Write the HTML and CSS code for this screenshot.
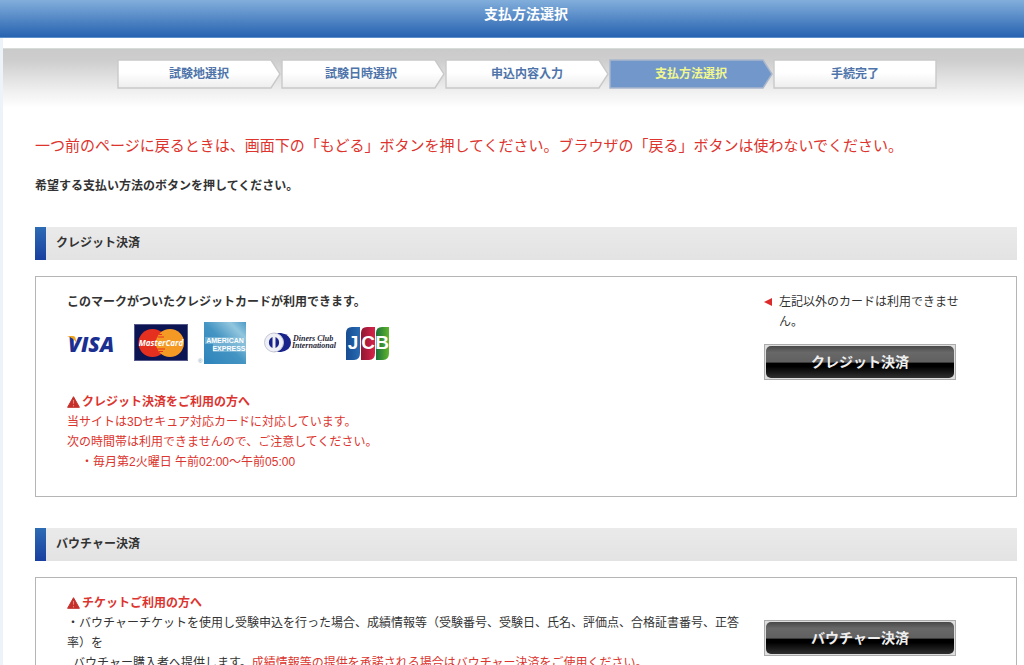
FILE: index.html
```html
<!DOCTYPE html>
<html lang="ja">
<head>
<meta charset="utf-8">
<title>支払方法選択</title>
<link rel="stylesheet" href="styles.css">
</head>
<body>
<header class="page-header"><h1>支払方法選択</h1></header>
<div class="page">
  <nav class="steps-band" aria-label="申込手順">
    <ol class="steps">
      <li class="step"><svg viewBox="0 0 164 30" aria-hidden="true"><use href="#arrow" fill="url(#stepFill)" stroke="#c9c9c9"/></svg><span>試験地選択</span></li>
      <li class="step step-early"><svg viewBox="0 0 164 30" aria-hidden="true"><use href="#arrow" fill="url(#stepFill)" stroke="#c9c9c9"/></svg><span>試験日時選択</span></li>
      <li class="step"><svg viewBox="0 0 164 30" aria-hidden="true"><use href="#arrow" fill="url(#stepFill)" stroke="#c9c9c9"/></svg><span>申込内容入力</span></li>
      <li class="step step-current" aria-current="step"><svg viewBox="0 0 164 30" aria-hidden="true"><use href="#arrow" fill="#7197cb" stroke="#a9b6cc"/></svg><span>支払方法選択</span></li>
      <li class="step"><svg viewBox="0 0 164 30" aria-hidden="true"><path d="M1 1H163V29H1Z" fill="url(#stepFill)" stroke="#c9c9c9" stroke-width="1.4"/></svg><span>手続完了</span></li>
    </ol>
  </nav>
  <svg class="defs" aria-hidden="true">
    <defs>
      <linearGradient id="stepFill" x1="0" y1="0" x2="0" y2="1"><stop offset=".45" stop-color="#fff"/><stop offset="1" stop-color="#ededed"/></linearGradient>
      <path id="arrow" d="M1 1H154L163 15L154 29H1Z" stroke-width="1.4"/>
      <symbol id="warning" viewBox="0 0 13 12"><path d="M6.5 .7L12.4 11.3H.6Z" fill="#c5302b" stroke="#c5302b" stroke-linejoin="round"/><path d="M6.5 4V7.8M6.5 9V10.4" stroke="#e0837d" stroke-width="1.1"/></symbol>
    </defs>
  </svg>
  <main class="content">
    <p class="notice">一つ前のページに戻るときは、画面下の「もどる」ボタンを押してください。ブラウザの「戻る」ボタンは使わないでください。</p>
    <p class="lead">希望する支払い方法のボタンを押してください。</p>

    <section class="method">
      <h2>クレジット決済</h2>
      <div class="box">
        <div class="details">
          <p class="strong">このマークがついたクレジットカードが利用できます。</p>
          <svg class="cards" viewBox="0 0 324 44" role="img" aria-label="VISA、MasterCard、American Express、Diners Club International、JCB">
            <defs>
              <linearGradient id="amex" x1="0" y1="1" x2="1" y2="0"><stop offset="0" stop-color="#2c83bb"/><stop offset=".5" stop-color="#4595c3"/><stop offset=".8" stop-color="#92c6de"/><stop offset="1" stop-color="#4b9bc7"/></linearGradient>
              <linearGradient id="jcbBlue"><stop offset="0" stop-color="#174c91"/><stop offset="1" stop-color="#286bb1"/></linearGradient>
              <linearGradient id="jcbRed"><stop offset="0" stop-color="#8f1834"/><stop offset="1" stop-color="#d72349"/></linearGradient>
              <linearGradient id="jcbGreen"><stop offset="0" stop-color="#18713a"/><stop offset="1" stop-color="#61b52c"/></linearGradient>
            </defs>
            <text x="1" y="31" class="visa">VISA</text>
            <path d="M0 15H6Q8 15 8.5 17L9.5 22Q7 17 0 15Z" fill="#f0a51f"/>
            <rect x="67.5" y="3.5" width="53" height="36" fill="#0c1554" stroke="#55598a"/>
            <circle cx="85.5" cy="22" r="14" fill="#e6301f"/>
            <circle cx="103" cy="22" r="14" fill="#f49a24"/>
            <path d="M92 13.5H95M90.5 16H97M90 28H98M92 30.5H96" stroke="#e6301f"/>
            <text x="94" y="25" text-anchor="middle" class="mastercard">MasterCard</text>
            <rect x="137" y="1" width="42" height="42" fill="url(#amex)"/>
            <path d="M138 16H177V22H179V31H146V23H138Z" fill="#8fc3dd" opacity=".6"/>
            <text x="158" y="22" text-anchor="middle" class="amex">AMERICAN</text>
            <text x="162" y="30" text-anchor="middle" class="amex">EXPRESS</text>
            <text x="131" y="42" class="registered">®</text>
            <path d="M208 12H214Q224 14 224 21.5T214 31H207Z" fill="#18248b"/>
            <circle cx="207" cy="21.5" r="9.5" fill="#eef0f5" stroke="#c4c7d5"/>
            <path d="M205.5 16A6 6 0 0 0 205.5 27ZM208.5 16A6 6 0 0 1 208.5 27Z" fill="#18248b"/>
            <text x="226" y="20" class="diners">Diners Club</text>
            <text x="225" y="27" class="diners">International</text>
            <path d="M285 6H293V32Q293 39 287 39H279V12Q279 6 285 6Z" fill="url(#jcbBlue)"/>
            <path d="M300 6H308V32Q308 39 302 39H294V12Q294 6 300 6Z" fill="url(#jcbRed)"/>
            <path d="M315 6H322V32Q322 39 316 39H309V12Q309 6 315 6Z" fill="url(#jcbGreen)"/>
            <text text-anchor="middle" y="28" class="jcb"><tspan x="286">J</tspan><tspan x="301">C</tspan><tspan x="315">B</tspan></text>
          </svg>
          <div class="red">
            <p class="caution"><svg class="warning" aria-hidden="true"><use href="#warning"/></svg>クレジット決済をご利用の方へ</p>
            <p>当サイトは3Dセキュア対応カードに対応しています。</p>
            <p>次の時間帯は利用できませんので、ご注意してください。</p>
            <p class="indent">・毎月第2火曜日 午前02:00～午前05:00</p>
          </div>
        </div>
        <div class="action">
          <p class="limit"><svg viewBox="0 0 8 8" aria-hidden="true"><path d="M0 4L8 0V8Z" fill="#dc2b2b"/></svg><span>左記以外のカードは利用できません。</span></p>
          <button type="button" class="pay"><span>クレジット決済</span></button>
        </div>
      </div>
    </section>

    <section class="method">
      <h2>バウチャー決済</h2>
      <div class="box">
        <div class="details">
          <p class="caution red"><svg class="warning" aria-hidden="true"><use href="#warning"/></svg>チケットご利用の方へ</p>
          <p>・バウチャーチケットを使用し受験申込を行った場合、成績情報等（受験番号、受験日、氏名、評価点、合格証書番号、正答率）を</p>
          <p class="continued">バウチャー購入者へ提供します。<span class="red">成績情報等の提供を承諾される場合はバウチャー決済をご使用ください。</span></p>
        </div>
        <div class="action action-lower">
          <button type="button" class="pay"><span>バウチャー決済</span></button>
        </div>
      </div>
    </section>
  </main>
</div>
</body>
</html>
```
FILE: styles.css
```css
* { box-sizing: border-box; }
body {
  margin: 0;
  background: #fff;
  color: #333;
  font: 12px/20px "Liberation Sans", "Noto Sans CJK JP", sans-serif;
}
h1, h2, p, ol { margin: 0; padding: 0; }
.page-header {
  padding: 4px 0 13px 28px;
  background: linear-gradient(#82aedb, #2763b1);
  border-bottom: 1px solid #5d8fca;
  text-align: center;
}
.page-header h1 { color: #fff; font-size: 14px; line-height: 20px; }
.page {
  padding-top: 10px;
  border-left: 3px solid #edf4f9;
}
.steps-band {
  padding: 10px 5px 19px 32px;
  border-top: 1px solid #d8dcd8;
  background: linear-gradient(#cacaca, #cecece 20%, #f0f0f0 72%, #fff);
}
.steps {
  display: flex;
  max-width: 820px;
  margin: 0 auto;
  list-style: none;
}
.step {
  flex: 1;
  display: grid;
  place-items: center;
  color: #4e74aa;
  font-weight: bold;
  line-height: 30px;
}
.step > * { grid-area: 1 / 1; }
.step svg { display: block; width: 100%; height: 30px; }
.step-early span { padding-right: 4px; }
.step-current { color: #f2f78e; }
.defs { display: block; width: 0; height: 0; }
.content { padding: 27px 7px 32px 32px; }
.notice { color: #dd342d; font-size: 15px; line-height: 22px; }
.lead { margin-top: 19px; font-weight: bold; }
.method { margin-top: 31px; }
.method h2 {
  padding: 6px 10px 7px;
  border: 0 solid;
  border-left-width: 11px;
  border-image: linear-gradient(#2e6db5, #183e9f) 1;
  background: linear-gradient(#eaeaea, #e3e3e3);
  font-size: 12px;
  line-height: 20px;
}
.box {
  display: flex;
  margin-top: 16px;
  padding: 15px 52px 24px 31px;
  border: 1px solid #b5b5b5;
}
.details { flex: 1; padding-right: 8px; }
.strong, .caution { font-weight: bold; }
.red { color: #dc342e; }
.cards { display: block; width: 324px; height: 44px; margin: 9px 0 27px; }
.visa { font: italic 800 21px "Open Sans", sans-serif; fill: #1b2f91; }
.mastercard { font: italic bold 8px "Open Sans", sans-serif; fill: #fff; }
.amex { font: bold 7px "Liberation Sans", sans-serif; fill: #fff; }
.registered { font: 6px "Liberation Sans", sans-serif; fill: #6f9fbb; }
.diners { font: italic bold 8px "Liberation Serif", serif; fill: #252535; }
.jcb { font: bold 19px "Liberation Sans", sans-serif; fill: #fff; }
.caution { display: flex; align-items: center; gap: 2px; }
.warning { width: 13px; height: 12px; }
.indent { padding-left: 14px; }
.continued { padding-left: 6px; }
.action { flex: 0 0 200px; }
.action-lower { padding-top: 27px; }
.limit { display: flex; gap: 7px; align-items: flex-start; margin-bottom: 12px; }
.limit svg { flex: none; width: 8px; height: 8px; margin-top: 6px; }
.pay {
  display: block;
  width: 192px;
  padding: 1px;
  border: 1px solid #ababab;
  background: #dedede;
  color: #eee;
  font: bold 14px/32px "Liberation Sans", "Noto Sans CJK JP", sans-serif;
  cursor: pointer;
}
.pay span {
  display: block;
  border-radius: 5px;
  background: linear-gradient(#484848, #686868 20%, #606060 50%, #000 54%, #000 64%, #303030);
}
```
